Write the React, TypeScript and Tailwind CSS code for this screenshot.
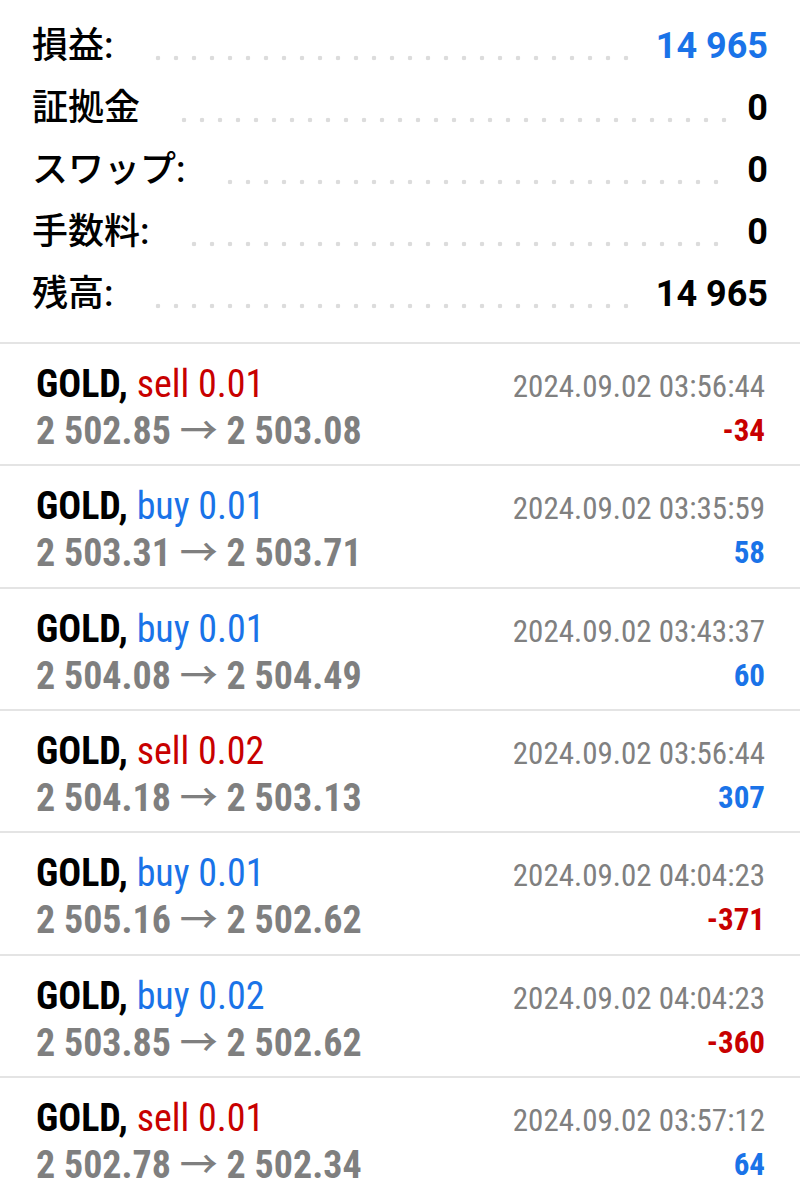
import React from 'react';

type Summary = { label: string; value: string; blue?: boolean };
type Trade = {
  side: 'buy' | 'sell';
  lot: string;
  open: string;
  close: string;
  time: string;
  profit: string;
};

const summary: Summary[] = [
  { label: '損益:', value: '14 965', blue: true },
  { label: '証拠金', value: '0' },
  { label: 'スワップ:', value: '0' },
  { label: '手数料:', value: '0' },
  { label: '残高:', value: '14 965' },
];

const trades: Trade[] = [
  { side: 'sell', lot: '0.01', open: '2 502.85', close: '2 503.08', time: '2024.09.02 03:56:44', profit: '-34' },
  { side: 'buy', lot: '0.01', open: '2 503.31', close: '2 503.71', time: '2024.09.02 03:35:59', profit: '58' },
  { side: 'buy', lot: '0.01', open: '2 504.08', close: '2 504.49', time: '2024.09.02 03:43:37', profit: '60' },
  { side: 'sell', lot: '0.02', open: '2 504.18', close: '2 503.13', time: '2024.09.02 03:56:44', profit: '307' },
  { side: 'buy', lot: '0.01', open: '2 505.16', close: '2 502.62', time: '2024.09.02 04:04:23', profit: '-371' },
  { side: 'buy', lot: '0.02', open: '2 503.85', close: '2 502.62', time: '2024.09.02 04:04:23', profit: '-360' },
  { side: 'sell', lot: '0.01', open: '2 502.78', close: '2 502.34', time: '2024.09.02 03:57:12', profit: '64' },
];

function SummaryRow({ row }: { row: Summary }) {
  return (
    <div className="flex items-baseline h-[62px]">
      <span className="text-[36px] leading-[62px] font-medium text-black">{row.label}</span>
      <div className="flex-1 self-stretch ml-[35px] mr-[18px] bg-[radial-gradient(circle,#dcdcdc_2px,transparent_2.6px)] bg-[length:18px_8px] bg-repeat-x bg-[position:left_bottom_15px]" />
      <span className={`text-[36px] leading-[62px] font-bold ${row.blue ? 'text-[#1a73e8]' : 'text-black'}`}>
        {row.value}
      </span>
    </div>
  );
}

function TradeRow({ trade }: { trade: Trade }) {
  const isSell = trade.side === 'sell';
  const loss = trade.profit.startsWith('-');
  return (
    <div className="h-[122.33px] border-t-2 border-[#e4e4e4] pl-9 pr-[35px] pt-[18px] flex items-baseline justify-between font-['Roboto_Condensed',Roboto,sans-serif] leading-[44px]">
      <div className="text-[38px]">
        <div className="whitespace-nowrap">
          <span className="font-bold text-black">GOLD,</span>{' '}
          <span className={isSell ? 'text-[#c80000]' : 'text-[#1a73e8]'}>
            {trade.side} {trade.lot}
          </span>
        </div>
        <div className="whitespace-nowrap font-bold text-[#7f7f7f]">
          {trade.open}{' '}
          <span className="font-['Noto_Sans_CJK_JP',sans-serif] font-medium">→</span>{' '}
          {trade.close}
        </div>
      </div>
      <div className="text-right text-[31px]">
        <div className="whitespace-nowrap text-[#808080]">{trade.time}</div>
        <div className={`font-bold ${loss ? 'text-[#c80000]' : 'text-[#1a73e8]'}`}>{trade.profit}</div>
      </div>
    </div>
  );
}

export default function App() {
  return (
    <div className="w-[800px] h-[1180px] overflow-hidden bg-white font-[Roboto,'Noto_Sans_CJK_JP',sans-serif]">
      <div className="px-8 pt-[15px] pb-[17px]">
        {summary.map((row) => (
          <SummaryRow key={row.label} row={row} />
        ))}
      </div>
      <div>
        {trades.map((t, i) => (
          <TradeRow key={i} trade={t} />
        ))}
      </div>
    </div>
  );
}
